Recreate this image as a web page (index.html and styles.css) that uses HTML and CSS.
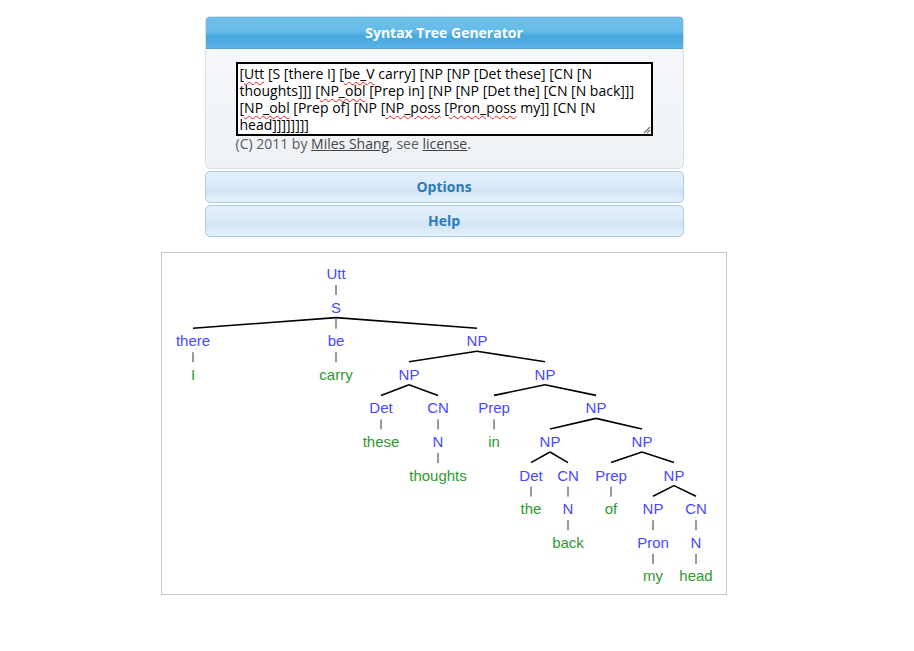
FILE: index.html
```html
<!DOCTYPE html>
<html>
<head>
<meta charset="utf-8">
<title>Syntax Tree Generator</title>
<link rel="stylesheet" href="styles.css">
</head>
<body>
<div class="page">
  <div class="app">
    <div class="panel">
      <div class="panel-head">Syntax Tree Generator</div>
      <div class="panel-body">
        <div class="editor">
          <div class="editor-text">[<span class="sp">Utt</span> [S [there I] [<span class="sp">be_V</span> carry] [NP [NP [Det these] [CN [N<br>thoughts]]] [<span class="sp">NP_obl</span> [Prep in] [NP [NP [Det the] [CN [N back]]]<br>[<span class="sp">NP_obl</span> [Prep of] [NP [<span class="sp">NP_poss</span> [<span class="sp">Pron_poss</span> my]] [CN [N<br>head]]]]]]]]</div>
          <svg class="grip" width="9" height="9" viewBox="0 0 9 9"><path d="M8 2 L2 8 M8 5 L5 8" stroke="#777" stroke-width="1.2" fill="none"/></svg>
        </div>
        <div class="credit">(C) 2011 by <a href="#">Miles Shang</a>, see <a href="#">license</a>.</div>
      </div>
    </div>
    <div class="toggle">Options</div>
    <div class="toggle">Help</div>
  </div>
  <div class="tree-box">
    <svg class="tree" width="564" height="341" viewBox="162 253 564 341">
      <g class="branch">
        <line x1="336" y1="317.6" x2="193" y2="328.2"/>
        <line x1="336" y1="317.6" x2="477" y2="328.2"/>
        <line x1="477" y1="351.2" x2="409" y2="361.8"/>
        <line x1="477" y1="351.2" x2="545" y2="361.8"/>
        <line x1="409" y1="384.8" x2="381" y2="395.4"/>
        <line x1="409" y1="384.8" x2="438" y2="395.4"/>
        <line x1="545" y1="384.8" x2="494" y2="395.4"/>
        <line x1="545" y1="384.8" x2="596" y2="395.4"/>
        <line x1="596" y1="418.4" x2="550" y2="429"/>
        <line x1="596" y1="418.4" x2="642" y2="429"/>
        <line x1="550" y1="452" x2="531" y2="462.6"/>
        <line x1="550" y1="452" x2="568" y2="462.6"/>
        <line x1="642" y1="452" x2="611" y2="462.6"/>
        <line x1="642" y1="452" x2="674" y2="462.6"/>
        <line x1="674" y1="485.6" x2="653" y2="496.2"/>
        <line x1="674" y1="485.6" x2="696" y2="496.2"/>
      </g>
      <g class="unary">
        <line x1="336" y1="285" x2="336" y2="295"/>
        <line x1="336" y1="318.6" x2="336" y2="328.6"/>
        <line x1="193" y1="352.2" x2="193" y2="362.2"/>
        <line x1="336" y1="352.2" x2="336" y2="362.2"/>
        <line x1="381" y1="419.4" x2="381" y2="429.4"/>
        <line x1="438" y1="419.4" x2="438" y2="429.4"/>
        <line x1="494" y1="419.4" x2="494" y2="429.4"/>
        <line x1="438" y1="453" x2="438" y2="463"/>
        <line x1="531" y1="486.6" x2="531" y2="496.6"/>
        <line x1="568" y1="486.6" x2="568" y2="496.6"/>
        <line x1="611" y1="486.6" x2="611" y2="496.6"/>
        <line x1="568" y1="520.2" x2="568" y2="530.2"/>
        <line x1="653" y1="520.2" x2="653" y2="530.2"/>
        <line x1="696" y1="520.2" x2="696" y2="530.2"/>
        <line x1="653" y1="553.8" x2="653" y2="563.8"/>
        <line x1="696" y1="553.8" x2="696" y2="563.8"/>
      </g>
      <g class="cat">
        <text x="336" y="279">Utt</text>
        <text x="336" y="312.6">S</text>
        <text x="193" y="346.2">there</text>
        <text x="336" y="346.2">be</text>
        <text x="477" y="346.2">NP</text>
        <text x="409" y="379.8">NP</text>
        <text x="545" y="379.8">NP</text>
        <text x="381" y="413.4">Det</text>
        <text x="438" y="413.4">CN</text>
        <text x="494" y="413.4">Prep</text>
        <text x="596" y="413.4">NP</text>
        <text x="438" y="447">N</text>
        <text x="550" y="447">NP</text>
        <text x="642" y="447">NP</text>
        <text x="531" y="480.6">Det</text>
        <text x="568" y="480.6">CN</text>
        <text x="611" y="480.6">Prep</text>
        <text x="674" y="480.6">NP</text>
        <text x="568" y="514.2">N</text>
        <text x="653" y="514.2">NP</text>
        <text x="696" y="514.2">CN</text>
        <text x="653" y="547.8">Pron</text>
        <text x="696" y="547.8">N</text>
      </g>
      <g class="word">
        <text x="193" y="379.8">I</text>
        <text x="336" y="379.8">carry</text>
        <text x="381" y="447">these</text>
        <text x="494" y="447">in</text>
        <text x="438" y="480.6">thoughts</text>
        <text x="531" y="514.2">the</text>
        <text x="611" y="514.2">of</text>
        <text x="568" y="547.8">back</text>
        <text x="653" y="581.4">my</text>
        <text x="696" y="581.4">head</text>
      </g>
    </svg>
  </div>
</div>
</body>
</html>
```

FILE: styles.css
```css
html, body {
  margin: 0;
  padding: 0;
  background: #fff;
}
body {
  padding: 8px;
  font-family: "Open Sans", "Noto Sans", sans-serif;
}
.page {
  width: 872px;
  display: flex;
  flex-direction: column;
  align-items: center;
}
.app {
  width: 479px;
  margin-top: 8px;
  display: flex;
  flex-direction: column;
  gap: 2px;
}
.panel {
  border: 1px solid #d9dfe6;
  border-radius: 5px;
  background: linear-gradient(#f7f8fa, #eef2f6);
  overflow: hidden;
}
.panel-head {
  height: 31px;
  line-height: 31px;
  margin: -1px -1px 0;
  border: 1px solid #4b9ed8;
  border-radius: 5px 5px 0 0;
  background: linear-gradient(#6fc0ea 0%, #66bbe8 45%, #45a8e0 62%, #5ab3e5 100%);
  color: #fff;
  font-weight: bold;
  font-size: 14px;
  text-align: center;
}
.panel-body {
  padding: 13px 30px 16px;
}
.editor {
  position: relative;
  width: 413px;
  height: 70px;
  border: 2px solid #000;
  background: #fff;
}
.editor-text {
  padding: 1px 1px 0 2px;
  font-size: 14px;
  line-height: 17px;
  color: #000;
  white-space: nowrap;
}
.sp {
  text-decoration: underline wavy #e02020;
  text-decoration-thickness: 1px;
  text-underline-offset: 2px;
}
.grip {
  position: absolute;
  right: 0;
  bottom: 0;
}
.credit {
  font-size: 14px;
  color: #5a5a5a;
  line-height: 16px;
  margin-top: 0;
}
.credit a {
  color: #444;
  text-decoration: underline;
}
.toggle {
  height: 30px;
  line-height: 30px;
  border: 1px solid #a9cbe8;
  border-radius: 5px;
  background: linear-gradient(#e3effb 0%, #dcebf8 45%, #d1e5f6 60%, #e4f0fb 100%);
  color: #2d7bb4;
  font-weight: bold;
  font-size: 14px;
  text-align: center;
}
.tree-box {
  margin-top: 15px;
  border: 1px solid #c8c8c8;
  width: 564px;
  height: 341px;
}
.tree {
  display: block;
}
.tree text {
  font-family: "Liberation Sans", Arial, sans-serif;
  font-size: 15px;
  text-anchor: middle;
}
.cat text { fill: #4848ff; }
.word text { fill: #2f982f; }
.branch line {
  stroke: #000;
  stroke-width: 1.6;
}
.unary line {
  stroke: #333;
  stroke-width: 1;
}
```
